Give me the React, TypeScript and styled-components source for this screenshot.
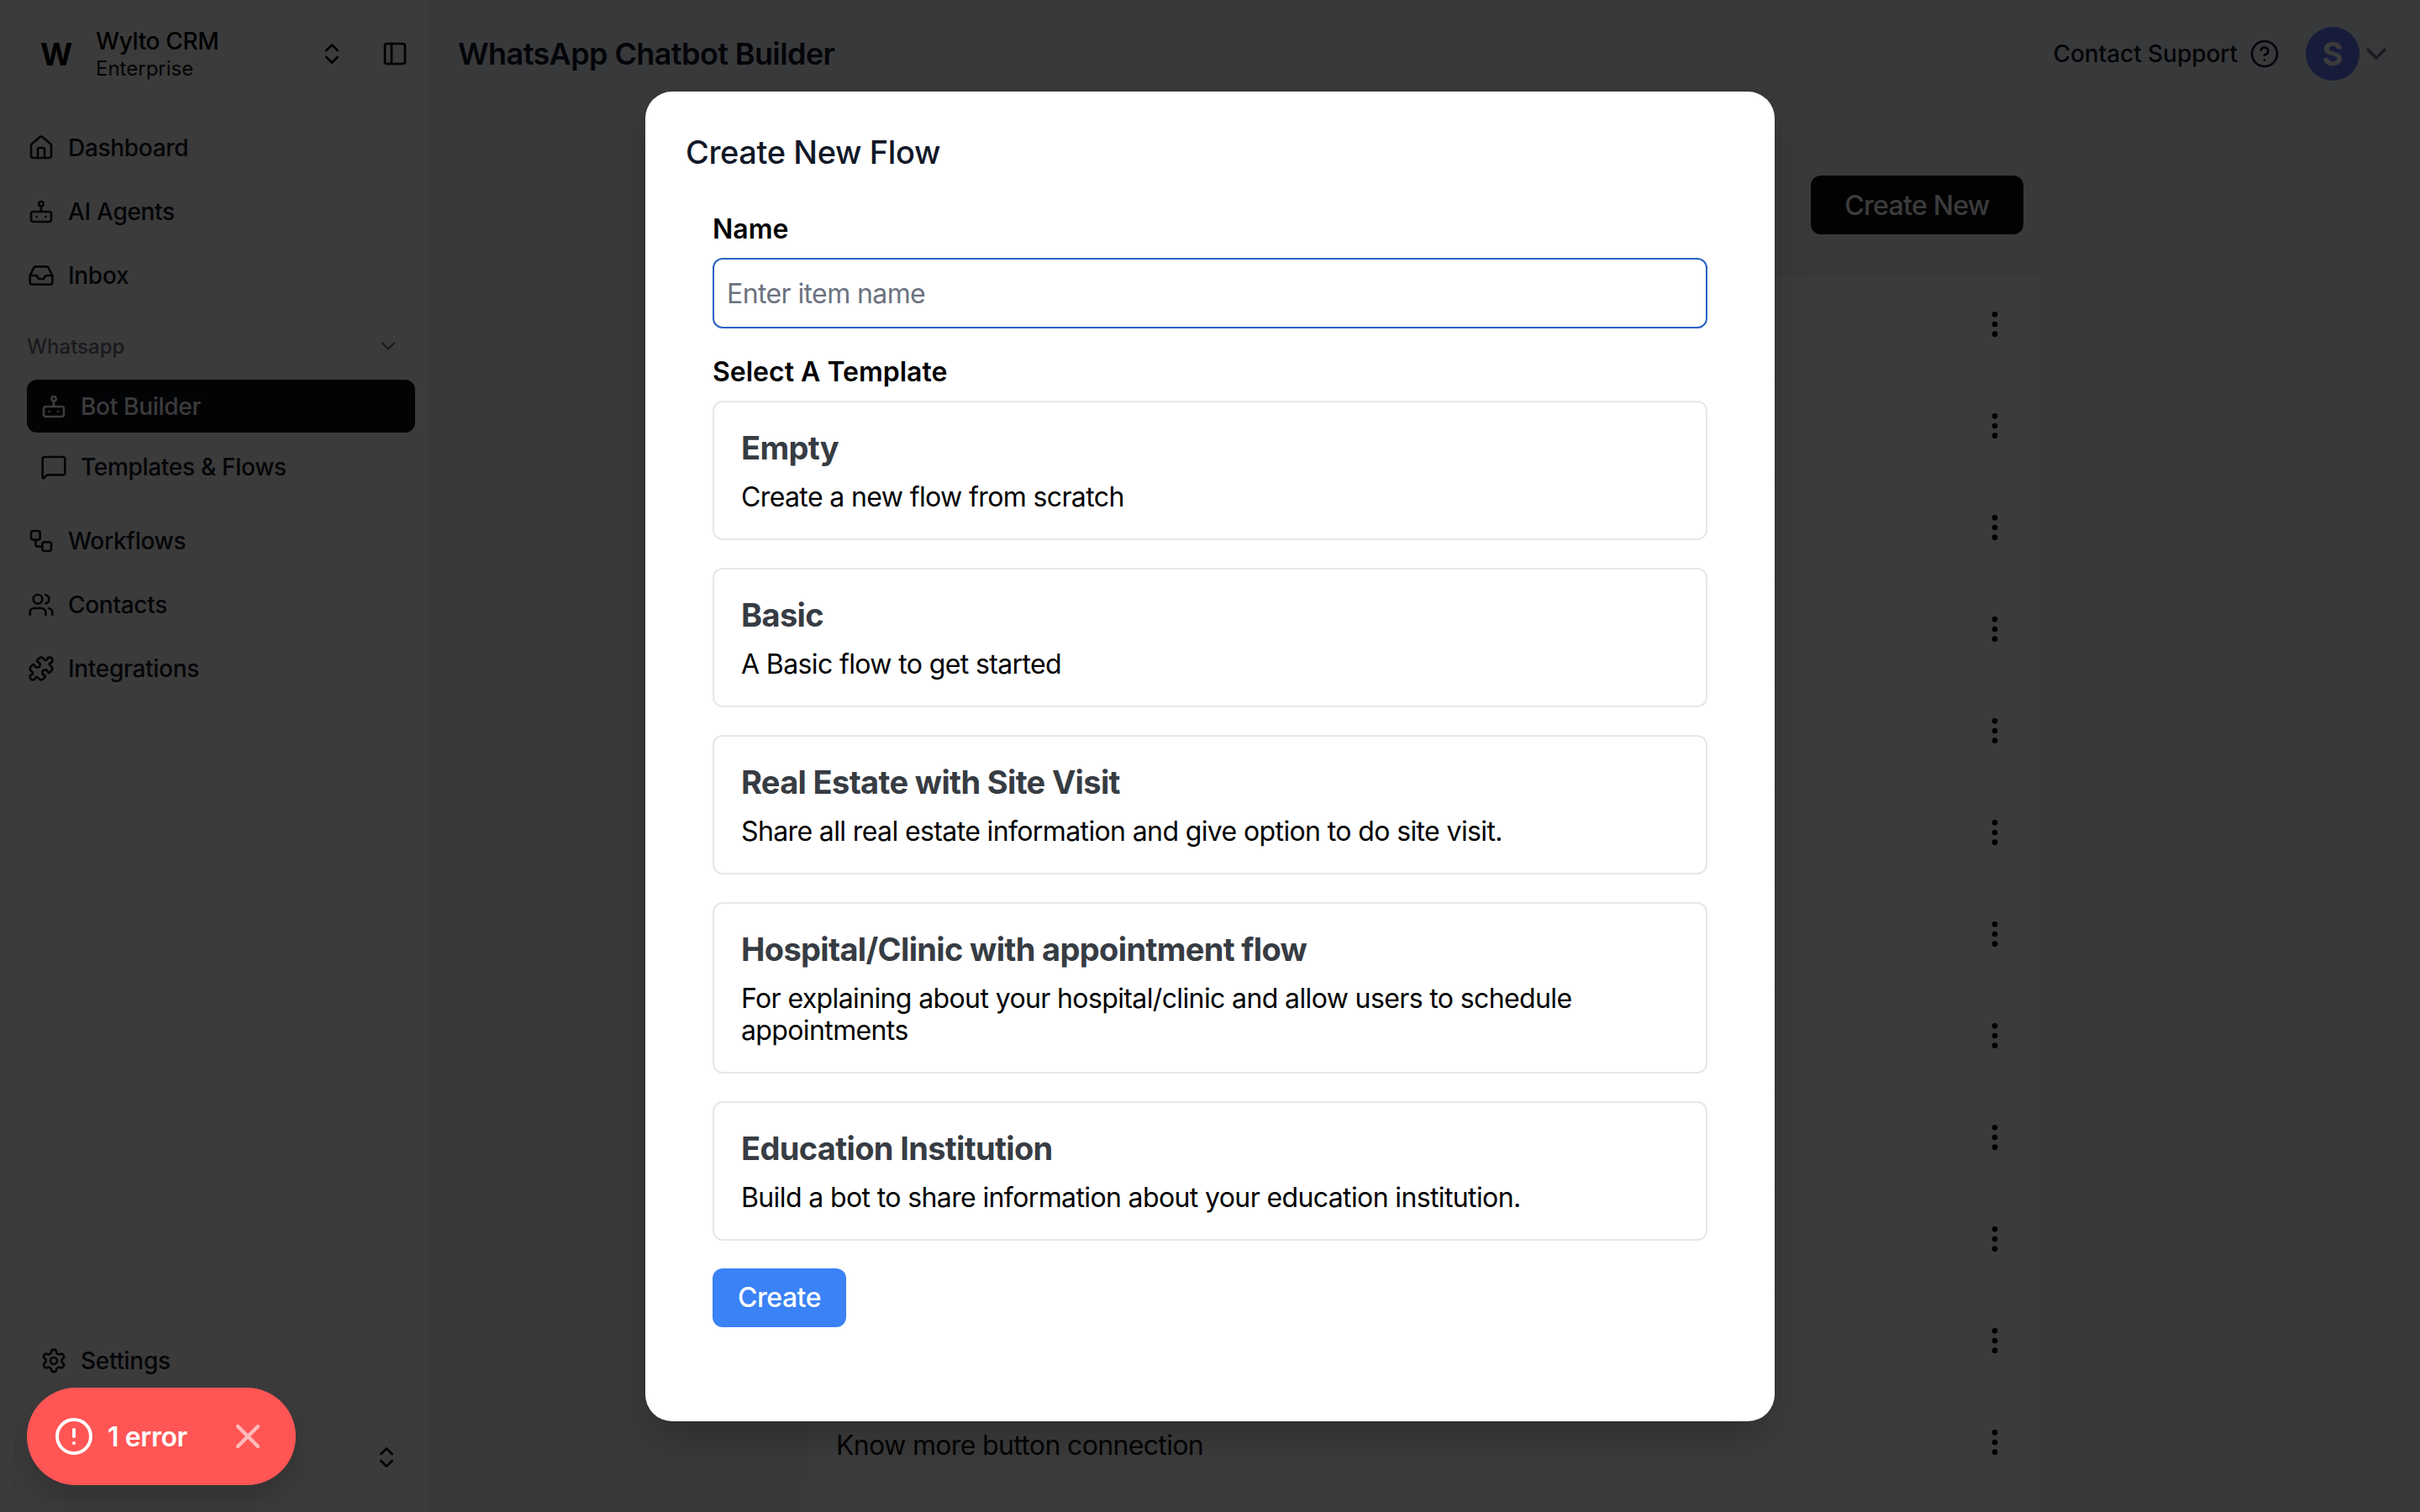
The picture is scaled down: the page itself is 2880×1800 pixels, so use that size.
import React from 'react';
import styled, { createGlobalStyle } from 'styled-components';
import {
  ChevronDown,
  ChevronsUpDown,
  CircleAlert,
  CircleHelp,
  EllipsisVertical,
  House,
  Inbox,
  MessageSquare,
  PanelLeft,
  Puzzle,
  Settings,
  Users,
  Workflow,
  X,
} from 'lucide-react';

const GlobalStyle = createGlobalStyle`
  * { box-sizing: border-box; }
  html, body { margin: 0; padding: 0; }
  body {
    font-family: Inter, "Noto Sans", sans-serif;
    background: #f3f4f8;
    color: #000;
  }
`;

// Small robot used for "AI Agents" and "Bot Builder"
const BotIcon: React.FC = () => (
  <svg width="32" height="32" viewBox="0 0 24 24" fill="none" stroke="currentColor" strokeWidth="2" strokeLinecap="round" strokeLinejoin="round">
    <rect x="3" y="12" width="18" height="9" rx="2" />
    <circle cx="12" cy="5" r="2" />
    <path d="M12 7v5" />
    <path d="M8 16.5h.01" />
    <path d="M16 16.5h.01" />
  </svg>
);

const templates = [
  { title: 'Empty', desc: 'Create a new flow from scratch' },
  { title: 'Basic', desc: 'A Basic flow to get started' },
  { title: 'Real Estate with Site Visit', desc: 'Share all real estate information and give option to do site visit.' },
  { title: 'Hospital/Clinic with appointment flow', desc: 'For explaining about your hospital/clinic and allow users to schedule appointments' },
  { title: 'Education Institution', desc: 'Build a bot to share information about your education institution.' },
];

const rows = ['', '', '', '', '', '', '', '', '', '', '', 'Know more button connection', ''];

const App: React.FC = () => {
  return (
    <Page>
      <GlobalStyle />
      <Sidebar>
        <TopRow>
          <Workspace>
            <Logo>W</Logo>
            <WorkspaceText>
              <WorkspaceName>Wylto CRM</WorkspaceName>
              <WorkspacePlan>Enterprise</WorkspacePlan>
            </WorkspaceText>
            <ChevronsUpDown size={32} strokeWidth={2} />
          </Workspace>
          <PanelButton>
            <PanelLeft size={32} strokeWidth={2} />
          </PanelButton>
        </TopRow>

        <NavGroup>
          <NavItem><House size={32} strokeWidth={2} />Dashboard</NavItem>
          <NavItem><BotIcon />AI Agents</NavItem>
          <NavItem><Inbox size={32} strokeWidth={2} />Inbox</NavItem>
        </NavGroup>

        <SectionLabel>
          Whatsapp
          <ChevronDown size={28} strokeWidth={2} />
        </SectionLabel>
        <SubGroup>
          <NavItem $sub $active><BotIcon />Bot Builder</NavItem>
          <NavItem $sub><MessageSquare size={32} strokeWidth={2} />Templates &amp; Flows</NavItem>
        </SubGroup>

        <NavGroup $tight>
          <NavItem><Workflow size={32} strokeWidth={2} />Workflows</NavItem>
          <NavItem><Users size={32} strokeWidth={2} />Contacts</NavItem>
          <NavItem><Puzzle size={32} strokeWidth={2} />Integrations</NavItem>
        </NavGroup>

        <SidebarFoot>
          <NavItem $sub><Settings size={32} strokeWidth={2} />Settings</NavItem>
          <UserCard>
            <ChevronsUpDown size={32} strokeWidth={2} />
          </UserCard>
        </SidebarFoot>
      </Sidebar>

      <Main>
        <Header>
          <PageTitle>WhatsApp Chatbot Builder</PageTitle>
          <HeaderRight>
            <Support>Contact Support</Support>
            <CircleHelp size={36} strokeWidth={1.8} />
            <Avatar>S</Avatar>
            <AvatarChevron><ChevronDown size={40} strokeWidth={2} /></AvatarChevron>
          </HeaderRight>
        </Header>
        <Content>
          <Toolbar>
            <CreateNew>Create New</CreateNew>
          </Toolbar>
          <Table>
            {rows.map((name, i) => (
              <Row key={i}>
                <RowName>{name}</RowName>
                <RowMenu><EllipsisVertical size={40} strokeWidth={2} /></RowMenu>
              </Row>
            ))}
          </Table>
        </Content>
      </Main>

      <Overlay>
        <Modal>
          <ModalTitle>Create New Flow</ModalTitle>
          <Form>
            <FieldLabel>Name</FieldLabel>
            <NameInput placeholder="Enter item name" />
            <TemplateLabel>Select A Template</TemplateLabel>
            <Cards>
              {templates.map((t) => (
                <Card key={t.title}>
                  <CardTitle>{t.title}</CardTitle>
                  <CardDesc>{t.desc}</CardDesc>
                </Card>
              ))}
            </Cards>
            <SubmitButton>Create</SubmitButton>
          </Form>
        </Modal>
      </Overlay>

      <ErrorToast>
        <CircleAlert size={48} strokeWidth={2} />
        <ToastText>1 error</ToastText>
        <ToastClose><X size={48} strokeWidth={2.2} /></ToastClose>
      </ErrorToast>
    </Page>
  );
};

const Page = styled.div`
  position: relative;
  display: flex;
  width: 2880px;
  height: 1800px;
  overflow: hidden;
`;

const Sidebar = styled.aside`
  display: flex;
  flex-direction: column;
  width: 512px;
  flex-shrink: 0;
  padding-top: 17px;
  background: #fff;
  border-right: 2px solid #f0f0f0;
`;

const TopRow = styled.div`
  display: flex;
  align-items: center;
  padding-left: 17px;
`;

const Workspace = styled.div`
  display: flex;
  align-items: center;
  width: 412px;
  height: 94px;
  padding: 0 16px 0 29px;
  border: 2px solid #f4f4f5;
  border-radius: 16px;
`;

const Logo = styled.div`
  width: 66px;
  font-size: 37px;
  font-weight: 700;
`;

const WorkspaceText = styled.div`
  flex: 1;
  display: flex;
  flex-direction: column;
  padding-top: 2px;
`;

const WorkspaceName = styled.div`
  font-size: 28px;
  font-weight: 500;
  line-height: 34px;
  letter-spacing: -0.35px;
`;

const WorkspacePlan = styled.div`
  font-size: 24px;
  line-height: 32px;
  color: #111;
`;

const PanelButton = styled.div`
  display: flex;
  margin-left: 25px;
`;

const NavGroup = styled.nav<{ $tight?: boolean }>`
  display: flex;
  flex-direction: column;
  gap: 16px;
  margin-top: ${(p) => (p.$tight ? '28px' : '35px')};
`;

const NavItem = styled.div<{ $sub?: boolean; $active?: boolean }>`
  display: flex;
  align-items: center;
  gap: 16px;
  height: ${(p) => (p.$active ? '63px' : '60px')};
  margin: 0 16px 0 32px;
  padding-left: ${(p) => (p.$sub ? '16px' : '1px')};
  border-radius: 12px;
  font-size: 28px;
  font-weight: 500;
  letter-spacing: -0.3px;
  color: ${(p) => (p.$active ? '#fff' : '#111827')};
  background: ${(p) => (p.$active ? '#0a0e17' : 'transparent')};
`;

const SectionLabel = styled.div`
  display: flex;
  align-items: center;
  justify-content: space-between;
  height: 40px;
  margin: 34px 0 0;
  padding: 0 34px 0 32px;
  font-size: 24px;
  font-weight: 500;
  color: #6b7280;
`;

const SubGroup = styled.div`
  display: flex;
  flex-direction: column;
  gap: 11px;
  margin-top: 20px;
`;

const SidebarFoot = styled.div`
  margin-top: auto;
`;

const UserCard = styled.div`
  display: flex;
  align-items: center;
  justify-content: flex-end;
  width: 475px;
  height: 94px;
  margin: 38px 0 18px 17px;
  padding-right: 14px;
  border: 2px solid #f4f4f5;
  border-radius: 16px;
`;

const Main = styled.main`
  flex: 1;
  min-width: 0;
`;

const Header = styled.header`
  display: flex;
  align-items: center;
  justify-content: space-between;
  height: 128px;
  padding: 0 32px 0 33px;
`;

const PageTitle = styled.h1`
  margin: 0;
  font-size: 36px;
  font-weight: 600;
  letter-spacing: -0.6px;
  color: #111827;
`;

const HeaderRight = styled.div`
  display: flex;
  align-items: center;
  color: #111827;
`;

const Support = styled.span`
  margin-right: 14px;
  font-size: 28px;
  font-weight: 500;
  letter-spacing: -0.05px;
`;

const Avatar = styled.div`
  display: flex;
  align-items: center;
  justify-content: center;
  width: 64px;
  height: 64px;
  margin-left: 31px;
  border-radius: 50%;
  font-size: 38px;
  font-weight: 700;
  color: #fff;
  background: #6a78ff;
`;

const AvatarChevron = styled.span`
  display: flex;
  color: #6b7280;
`;

const Content = styled.div`
  width: 1467px;
  margin-left: 449px;
`;

const Toolbar = styled.div`
  display: flex;
  justify-content: flex-end;
  margin-top: 81px;
  padding-right: 20px;
`;

const CreateNew = styled.button`
  width: 253px;
  height: 70px;
  border: none;
  border-radius: 12px;
  font-family: inherit;
  font-size: 32px;
  font-weight: 500;
  letter-spacing: -0.7px;
  color: #fff;
  background: #0a0a0a;
`;

const Table = styled.div`
  margin-top: 51px;
  background: #fff;
`;

const Row = styled.div`
  display: flex;
  align-items: center;
  justify-content: space-between;
  height: 121px;
  padding: 0 34px;
  border-bottom: 2px solid #f3f4f6;
`;

const RowName = styled.span`
  font-size: 32px;
  letter-spacing: -0.65px;
  color: #111;
`;

const RowMenu = styled.span`
  display: flex;
  margin-bottom: 8px;
  color: #000;
`;

const Overlay = styled.div`
  position: absolute;
  inset: 0;
  display: flex;
  align-items: center;
  justify-content: center;
  background: rgba(0, 0, 0, 0.77);
`;

const Modal = styled.div`
  width: 1344px;
  height: 1583px;
  padding: 48px 48px 0;
  border-radius: 32px;
  background: #fff;
  box-shadow: 0 25px 50px -12px rgba(0, 0, 0, 0.25);
`;

const ModalTitle = styled.h2`
  margin: 0;
  font-size: 38px;
  font-weight: 500;
  line-height: 48px;
  letter-spacing: -0.4px;
  color: #111827;
`;

const Form = styled.div`
  display: flex;
  flex-direction: column;
  align-items: flex-start;
  padding: 0 32px;
`;

const FieldLabel = styled.label`
  margin-top: 50px;
  font-size: 32px;
  font-weight: 600;
  line-height: 36px;
`;

const NameInput = styled.input`
  width: 100%;
  height: 84px;
  margin-top: 16px;
  padding: 2px 15px 0;
  border: 2.5px solid #2b62c4;
  border-radius: 12px;
  outline: none;
  font-family: inherit;
  font-size: 32px;
  letter-spacing: -0.6px;
  background: #fff;

  &::placeholder {
    color: #6b7280;
  }
`;

const TemplateLabel = styled(FieldLabel)`
  margin-top: 34px;
`;

const Cards = styled.div`
  display: flex;
  flex-direction: column;
  gap: 33px;
  width: 100%;
  margin-top: 16px;
`;

const Card = styled.div`
  padding: 28px 32px 30px;
  border: 2px solid #e5e7eb;
  border-radius: 12px;
`;

const CardTitle = styled.div`
  font-size: 38px;
  font-weight: 700;
  line-height: 52px;
  letter-spacing: -0.65px;
  color: #373c43;
`;

const CardDesc = styled.div`
  margin-top: 14px;
  font-size: 32px;
  line-height: 38px;
  letter-spacing: -0.62px;
  color: #000;
`;

const SubmitButton = styled.button`
  width: 159px;
  height: 70px;
  margin-top: 33px;
  border: none;
  border-radius: 12px;
  font-family: inherit;
  font-size: 32px;
  font-weight: 500;
  letter-spacing: -0.5px;
  color: #fff;
  background: #3b82f6;
`;

const ErrorToast = styled.div`
  position: absolute;
  left: 32px;
  top: 1652px;
  display: flex;
  align-items: center;
  width: 320px;
  height: 116px;
  padding-left: 32px;
  border-radius: 58px;
  color: #fff;
  background: #ff5555;
  box-shadow: 0 16px 32px rgba(0, 0, 0, 0.15);
`;

const ToastText = styled.span`
  margin-left: 16px;
  font-size: 32px;
  font-weight: 600;
  letter-spacing: -0.4px;
`;

const ToastClose = styled.span`
  display: flex;
  margin-left: 48px;
  opacity: 0.6;
`;

export default App;
